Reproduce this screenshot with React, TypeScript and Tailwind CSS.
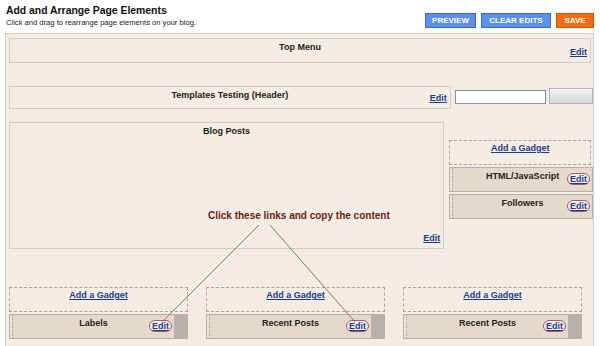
import React from "react";

const f = { fontFamily: '"Liberation Sans", Arial, sans-serif' };

function EditLink({ circled = false }: { circled?: boolean }) {
  if (circled) {
    return (
      <span className="inline-block rounded-full border border-[#c0504d] bg-[#eef0f8] px-[2px] leading-[10px] text-[9px] font-bold text-[#1b3c8c] underline">
        Edit
      </span>
    );
  }
  return <span className="text-[9px] font-bold text-[#1b3c8c] underline leading-[10px]">Edit</span>;
}

function Gadget({ w }: { w: string }) {
  return (
    <div className={`${w} h-[25px] border border-dashed border-[#a9a39c] flex justify-center pt-[1px]`}>
      <span className="text-[9px] font-bold text-[#1b3c8c] underline">Add a Gadget</span>
    </div>
  );
}

function Widget({ title, strip = true }: { title: string; strip?: boolean }) {
  return (
    <div className="h-[25px] flex border border-[#b8b0a6] bg-[#e4dacb]">
      <div className="w-[3px] border-r border-dotted border-[#9c958c] bg-[#ece4d8]" />
      <div className="flex-1 relative flex justify-center pt-[2px]">
        <span className="text-[9px] font-bold text-[#222]">{title}</span>
        <div className="absolute right-[2px] bottom-[2px]">
          <EditLink circled />
        </div>
      </div>
      {strip && <div className="w-[13px] bg-[#b6b1ac]" />}
    </div>
  );
}

export default function App() {
  return (
    <div style={f} className="relative w-[600px] h-[346px] overflow-hidden bg-white">
      <div className="flex justify-between pl-[6px] pr-[6px] pt-[4px]">
        <div>
          <div className="text-[10.4px] font-bold text-[#111] leading-[13px]">Add and Arrange Page Elements</div>
          <div className="text-[7.6px] text-[#222] leading-[10px] mt-[1px]">Click and drag to rearrange page elements on your blog.</div>
        </div>
        <div className="flex gap-[5px] mt-[9px] h-[15px]">
          <div className="w-[51px] bg-[#5c8fe6] border border-[#3b6bc4] text-white text-[8px] font-bold flex items-center justify-center">PREVIEW</div>
          <div className="w-[70px] bg-[#5c8fe6] border border-[#3b6bc4] text-white text-[8px] font-bold flex items-center justify-center">CLEAR EDITS</div>
          <div className="w-[38px] bg-[#f76b0f] border border-[#d25400] text-white text-[8px] font-bold flex items-center justify-center">SAVE</div>
        </div>
      </div>

      <div className="ml-[5px] mt-[5px] w-[589px] h-[320px] border-l border-t border-r border-[#d6cfc7] bg-[#f3ece3] pl-[3px] pt-[4px]">
        {/* Top menu */}
        <div className="relative w-[582px] h-[25px] border border-[#d3ccc3] flex justify-center pt-[2px]">
          <span className="text-[9px] font-bold text-[#222]">Top Menu</span>
          <div className="absolute right-[3px] bottom-[0px]"><EditLink /></div>
        </div>

        {/* Header row */}
        <div className="flex items-start mt-[23px]">
          <div className="relative w-[444px] h-[23px] border border-[#d3ccc3] flex justify-center pt-[2px]">
            <span className="text-[9px] font-bold text-[#222]">Templates Testing (Header)</span>
            <div className="absolute right-[3px] bottom-[0px]"><EditLink /></div>
          </div>
          <div className="ml-[4px] mt-[4px] w-[92px] h-[14px] bg-white border border-[#8e8e8e]" />
          <div className="ml-[3px] mt-[2px] w-[44px] h-[16px] border border-[#b5b5b5] bg-gradient-to-b from-[#f4f4f4] to-[#d5d5d5]" />
        </div>

        {/* Blog posts + sidebar */}
        <div className="flex mt-[13px]">
          <div className="relative w-[436px] h-[127px] border border-[#d3ccc3] flex flex-col items-start pt-[2px]">
            <span className="self-center text-[9px] font-bold text-[#222]">Blog Posts</span>
            <span className="mt-[69px] ml-[198px] text-[10px] font-bold text-[#6e1a14]">Click these links and copy the content</span>
            <div className="absolute right-[3px] bottom-[0px]"><EditLink /></div>
          </div>
          <div className="ml-[5px] mt-[18px] flex flex-col w-[144px]">
            <Gadget w="w-[142px]" />
            <div className="mt-[2px] flex flex-col gap-[2px]">
              <Widget title="HTML/JavaScript" strip={false} />
              <Widget title="Followers" strip={false} />
            </div>
          </div>
        </div>

        {/* Bottom gadgets */}
        <div className="flex gap-[18px] mt-[38px]">
          {["Labels", "Recent Posts", "Recent Posts"].map((t, i) => (
            <div key={i} className="w-[179px] flex flex-col gap-[2px]">
              <Gadget w="w-[179px]" />
              <Widget title={t} />
            </div>
          ))}
        </div>
      </div>

      <svg className="absolute left-0 top-0 pointer-events-none" width="600" height="346">
        <line x1="259" y1="225" x2="163" y2="321" stroke="#a83c3c" strokeWidth="0.8" />
        <line x1="270" y1="225" x2="355" y2="322" stroke="#a83c3c" strokeWidth="0.8" />
      </svg>
    </div>
  );
}
